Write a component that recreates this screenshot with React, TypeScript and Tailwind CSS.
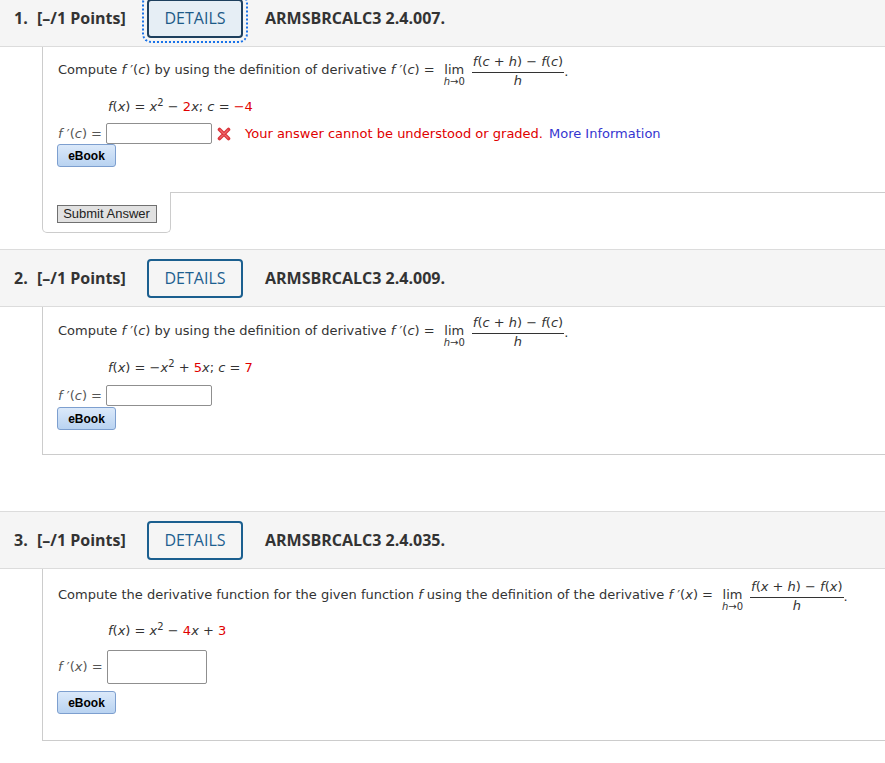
import React from "react";

const I = ({ children }: { children: React.ReactNode }) => <i className="italic">{children}</i>;
const R = ({ children }: { children: React.ReactNode }) => <span className="text-[#e00000]">{children}</span>;

function Header({ num, code, focused }: { num: number; code: string; focused?: boolean }) {
  return (
    <div className="flex items-center h-[58px] border-y border-[#dcdcdc] bg-[#f5f5f5] pl-[14px] font-['Open_Sans',sans-serif] text-[16px] text-[#333]">
      <span className="font-bold w-[23px]">{num}.</span>
      <span className="font-bold w-[110px]">[–/1 Points]</span>
      <button
        className={
          focused
            ? "w-[96px] h-[39px] rounded-[4px] border-2 border-[#1d3f5e] bg-[#e6eef5] text-[#1d5a88] outline-2 outline-dotted outline-[#1a73e8] outline-offset-[3px]"
            : "w-[96px] h-[39px] rounded-[4px] border-2 border-[#1b5f8f] text-[#1d6090]"
        }
      >
        DETAILS
      </button>
      <span className="ml-[22px] font-bold">{code}</span>
    </div>
  );
}

function Frac({ v }: { v: string }) {
  return (
    <div className="flex items-start">
      <div className="flex flex-col items-center ml-[9px]">
        <span className="leading-[16px] mt-[8px]">lim</span>
        <span className="text-[10px] leading-[12px] -mt-[2px]">
          <I>h</I>→0
        </span>
      </div>
      <div className="flex flex-col items-center ml-[7px]">
        <span className="leading-[16px] px-[1px]">
          <I>f</I>(<I>{v}</I> + <I>h</I>) − <I>f</I>(<I>{v}</I>)
        </span>
        <span className="h-[1px] w-full bg-[#333] mt-[2px]" />
        <span className="leading-[16px]">
          <I>h</I>
        </span>
      </div>
      <span className="leading-[16px] mt-[10px]">.</span>
    </div>
  );
}

function EBook() {
  return (
    <button className="-ml-[1px] w-[59px] h-[23px] rounded-[3px] border border-[#7d9fcf] bg-gradient-to-b from-[#dbe9fa] to-[#b9d3f1] font-['Liberation_Sans',Arial,sans-serif] font-bold text-[12px] text-black">
      eBook
    </button>
  );
}

function XIcon() {
  return (
    <svg width="14" height="14" viewBox="0 0 14 14" className="ml-[5px]">
      <path d="M2.5 2.5 L11.5 11.5 M11.5 2.5 L2.5 11.5" stroke="#d9343a" strokeWidth="3.6" strokeLinecap="round" />
      <path d="M3 3 L11 11 M11 3 L3 11" stroke="#f0676b" strokeWidth="1.2" strokeLinecap="round" />
    </svg>
  );
}

function Intro({ children, v }: { children: React.ReactNode; v: string }) {
  return (
    <div className="flex items-start">
      <span className="leading-[16px] mt-[8px] whitespace-pre">{children}</span>
      <Frac v={v} />
    </div>
  );
}

export default function App() {
  return (
    <div className="-mt-[11px] w-[885px] bg-white font-['DejaVu_Sans',Verdana,sans-serif] text-[13px] text-[#333]">
      {/* Question 1 */}
      <Header num={1} code="ARMSBRCALC3 2.4.007." focused />
      <div className="ml-[42px] border-l border-[#cccccc] pl-[15px] pt-[7px] pb-[25px]">
        <Intro v="c">
          Compute <I>f</I> ′(<I>c</I>) by using the definition of derivative <I>f</I> ′(<I>c</I>) =
        </Intro>
        <div className="mt-[9px] ml-[50px] leading-[18px]">
          <I>f</I>(<I>x</I>) = <I>x</I>
          <sup className="text-[10px]">2</sup> − <R>2</R>
          <I>x</I>; <I>c</I> = <R>−4</R>
        </div>
        <div className="mt-[7px] flex items-center">
          <span className="w-[48px] text-[#555]">
            <I>f</I> ′(<I>c</I>) =
          </span>
          <span className="w-[106px] h-[21px] border border-[#8f8f8f] rounded-[2px] bg-white" />
          <XIcon />
          <span className="ml-[14px] text-[#e00000]">Your answer cannot be understood or graded.</span>
          <span className="ml-[6px] text-[#3535d0]">More Information</span>
        </div>
        <div>
          <EBook />
        </div>
      </div>
      <div className="flex mb-[16px]">
        <div className="ml-[42px] w-[129px] h-[41px] border-l border-r border-b border-[#cccccc] rounded-b-[5px] flex items-center justify-center pt-[3px]">
          <button className="w-[100px] h-[18px] border border-[#707070] bg-[#e1e1e1] font-['Liberation_Sans',Arial,sans-serif] text-[13px] text-[#222] leading-[16px]">
            Submit Answer
          </button>
        </div>
        <div className="flex-1 border-t border-[#cccccc]" />
      </div>

      {/* Question 2 */}
      <Header num={2} code="ARMSBRCALC3 2.4.009." />
      <div className="ml-[42px] border-l border-b border-[#cccccc] pl-[15px] pt-[8px] pb-[24px]">
        <Intro v="c">
          Compute <I>f</I> ′(<I>c</I>) by using the definition of derivative <I>f</I> ′(<I>c</I>) =
        </Intro>
        <div className="mt-[9px] ml-[50px] leading-[18px]">
          <I>f</I>(<I>x</I>) = −<I>x</I>
          <sup className="text-[10px]">2</sup> + <R>5</R>
          <I>x</I>; <I>c</I> = <R>7</R>
        </div>
        <div className="mt-[8px] flex items-center">
          <span className="w-[48px] text-[#555]">
            <I>f</I> ′(<I>c</I>) =
          </span>
          <span className="w-[106px] h-[21px] border border-[#8f8f8f] rounded-[2px] bg-white" />
        </div>
        <div className="mt-[1px]">
          <EBook />
        </div>
      </div>
      <div className="h-[56px]" />

      {/* Question 3 */}
      <Header num={3} code="ARMSBRCALC3 2.4.035." />
      <div className="ml-[42px] border-l border-b border-[#cccccc] pl-[15px] pt-[10px] pb-[26px]">
        <Intro v="x">
          Compute the derivative function for the given function <I>f</I> using the definition of the derivative <I>f</I> ′(<I>x</I>) =
        </Intro>
        <div className="mt-[8px] ml-[50px] leading-[18px]">
          <I>f</I>(<I>x</I>) = <I>x</I>
          <sup className="text-[10px]">2</sup> − <R>4</R>
          <I>x</I> + <R>3</R>
        </div>
        <div className="mt-[10px] flex items-center">
          <span className="w-[49px] text-[#555]">
            <I>f</I> ′(<I>x</I>) =
          </span>
          <span className="w-[100px] h-[34px] border border-[#8f8f8f] rounded-[2px] bg-white" />
        </div>
        <div className="mt-[7px]">
          <EBook />
        </div>
      </div>
    </div>
  );
}
